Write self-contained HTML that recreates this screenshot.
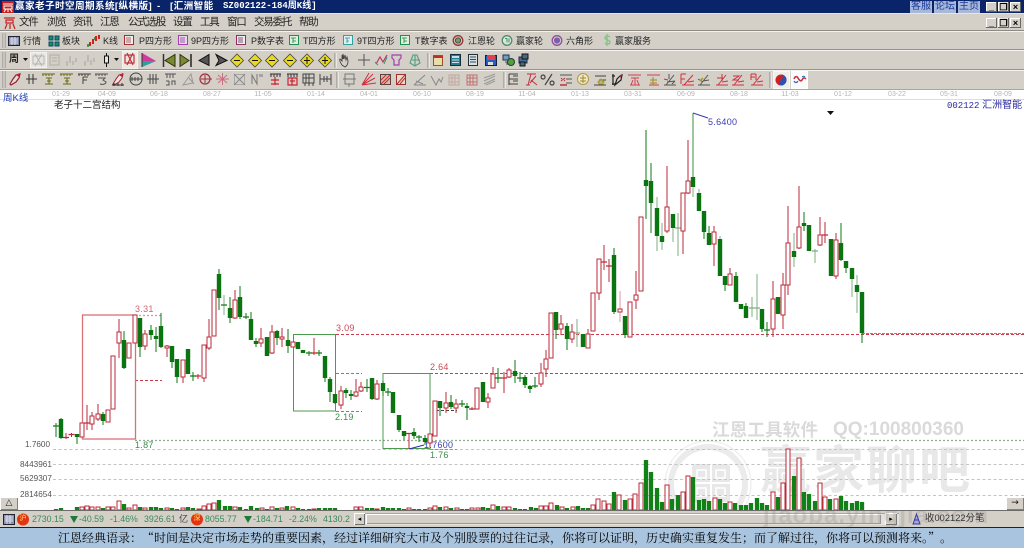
<!DOCTYPE html>
<html lang="zh"><head><meta charset="utf-8"><title>赢家老子时空周期系统</title>
<style>
html,body{margin:0;padding:0;background:#fff}
#p{position:relative;width:1024px;height:548px;overflow:hidden;background:#fff;font-family:"Liberation Sans","Noto Sans CJK SC",sans-serif;filter:blur(.22px)}
#p div,#p span.a{position:absolute;white-space:nowrap}
.bar{left:0;width:1024px;background:#d4d0c8}
.t{font-size:9px;line-height:12px;color:#222;font-family:"Liberation Sans","Noto Sans CJK SC",sans-serif}
.m{font-size:10.5px;line-height:14px;color:#222;top:15px;letter-spacing:-1.2px}
.w{color:#fff;font-weight:bold;font-size:9.6px;line-height:13px;top:0}
.d{top:91px;font:7px/8px "Liberation Sans",sans-serif;color:#b4b4b4;transform:translateX(-50%)}
.n{font:8.2px/10px "Liberation Sans",sans-serif;color:#555}
.l{font:9px/10px "Liberation Sans",sans-serif;letter-spacing:.3px}
.s{top:514px;font:8.8px/10px "Liberation Sans",sans-serif;color:#3a8a5c}
.wm{font-weight:bold;font-family:"Liberation Sans","Noto Sans CJK SC",sans-serif}
svg{position:absolute;left:0;top:0}
.hb{top:1px;height:12px;background:#a8b8d8;color:#1a3aa0;font-size:10px;line-height:12px;text-align:center;width:22px}
.wb{background:#d4d0c8;width:11px;height:10px;color:#000;font:bold 9px/10px "Liberation Sans",sans-serif;text-align:center;box-shadow:inset -1px -1px #666,inset 1px 1px #fff}
</style></head><body><div id="p">

<!-- chrome bars -->
<div style="left:0;top:0;width:1024px;height:13px;background:#0a246a"></div>
<div style="left:0;top:13px;width:1024px;height:1px;background:#e8e6e0"></div>
<div class="bar" style="top:14px;height:76px"></div>
<div style="left:0;top:30px;width:1024px;height:1px;background:#8c8a84"></div>
<div style="left:0;top:31px;width:1024px;height:1px;background:#f4f2ee"></div>
<div style="left:0;top:49px;width:1024px;height:1px;background:#96948e"></div>
<div style="left:0;top:50px;width:1024px;height:1px;background:#f4f2ee"></div>
<div style="left:0;top:69px;width:1024px;height:1px;background:#96948e"></div>
<div style="left:0;top:70px;width:1024px;height:1px;background:#f4f2ee"></div>
<div style="left:0;top:89px;width:1024px;height:1px;background:#a8a6a0"></div>

<!-- title bar -->
<svg width="16" height="14" viewBox="0 0 16 14" style="left:1px;top:0"><rect x="1" y="1" width="12" height="12" fill="#c82020"/><path d="M2 4h10M3 6h8v3H3zM3 12l2-3M7 9v3M11 12l-2-3" stroke="#fff" stroke-width="1" fill="none"/></svg>
<div class="w" style="left:15px;letter-spacing:.4px">赢家老子时空周期系统[纵横版]</div>
<div class="w" style="left:157px">-</div>
<div class="w" style="left:170px;letter-spacing:.4px">[汇洲智能</div>
<div class="w" style="left:223px;font-family:'Liberation Mono','Noto Sans CJK SC',monospace;font-size:9px">SZ002122-184周K线]</div>
<div class="hb" style="left:910px">客服</div><div class="hb" style="left:934px">论坛</div><div class="hb" style="left:958px">主页</div>
<div class="wb" style="left:986px;top:2px">_</div><div class="wb" style="left:998px;top:2px">&#10064;</div><div class="wb" style="left:1010px;top:2px">×</div>
<div class="wb" style="left:986px;top:18px">_</div><div class="wb" style="left:998px;top:18px">&#10064;</div><div class="wb" style="left:1010px;top:18px">×</div>

<!-- menu -->
<svg width="14" height="14" viewBox="0 0 14 14" style="left:3px;top:16px"><path d="M1 2h11M3 4h7v3H3zM2 13l2-5M7 8v5M12 13l-2-5" stroke="#c82020" stroke-width="1.2" fill="none"/></svg>
<div class="m" style="left:19px">文件</div><div class="m" style="left:47px">浏览</div><div class="m" style="left:73px">资讯</div><div class="m" style="left:100px">江恩</div><div class="m" style="left:128px">公式选股</div><div class="m" style="left:173px">设置</div><div class="m" style="left:200px">工具</div><div class="m" style="left:227px">窗口</div><div class="m" style="left:254px">交易委托</div><div class="m" style="left:299px">帮助</div>

<!-- toolbar text -->
<div class="t" style="left:23px;top:35px">行情</div><div class="t" style="left:62px;top:35px">板块</div><div class="t" style="left:103px;top:35px">K线</div>
<div class="t" style="left:139px;top:35px">P四方形</div><div class="t" style="left:191px;top:35px">9P四方形</div><div class="t" style="left:251px;top:35px">P数字表</div><div class="t" style="left:303px;top:35px">T四方形</div><div class="t" style="left:357px;top:35px">9T四方形</div><div class="t" style="left:415px;top:35px">T数字表</div><div class="t" style="left:468px;top:35px">江恩轮</div><div class="t" style="left:516px;top:35px">赢家轮</div><div class="t" style="left:566px;top:35px">六角形</div><div class="t" style="left:615px;top:35px">赢家服务</div>
<div class="t" style="left:9px;top:54px;font-weight:bold;font-size:10px">周</div>

<!-- toolbar icons -->
<svg width="1024" height="90" viewBox="0 0 1024 90" fill="none">
<path d="M3 33v15M3 52v16M3 71v17M5 71v17M5 52v16M5 33v15M335 53v15M428 53v15M337 72v16M504 72v16M770 72v16" stroke="#8c8a84"/>
<path d="M4 33v15M4 52v16M4 71v17M336 53v15M429 53v15M338 72v16M505 72v16M771 72v16" stroke="#fff"/>
<!-- row1 -->
<rect x="8.5" y="36.5" width="11" height="9" fill="#7c8aa8" stroke="#223"/><path d="M10 39h8M10 41h8M10 43h8M12 37v8M15 37v8" stroke="#dde"/>
<path d="M49 36h4v4h-4zM55 36h4v4h-4zM49 42h4v4h-4zM55 42h4v4h-4z" fill="#1c8c70" stroke="#0a4a60"/>
<path d="M90 46v-4M93 44v-5M96 41v-5M99 39v-4" stroke="#d02020" stroke-width="2"/><path d="M88 47v-3M95 40v-3" stroke="#208020" stroke-width="1.5"/>
<g stroke-width="1"><rect x="124.500" y="35.500" width="9" height="9" fill="#eee" stroke="#a03030"/><rect x="178.500" y="35.500" width="9" height="9" fill="#e8d8ea" stroke="#a040b0"/><rect x="236.500" y="35.500" width="9" height="9" fill="#eee" stroke="#903060"/><rect x="289.500" y="35.500" width="9" height="9" fill="#e0f0e0" stroke="#209050"/><rect x="343.500" y="35.500" width="9" height="9" fill="#e0f0f0" stroke="#30a0a0"/><rect x="400.500" y="35.500" width="9" height="9" fill="#e0f0e0" stroke="#209050"/></g>
<path d="M126 38h5M126 40h5M126 42h5" stroke="#a03030" stroke-width=".8"/><path d="M180 38h5M180 40h5M180 42h5" stroke="#903090" stroke-width=".8"/><path d="M238 38h5M238 40h5M238 42h5" stroke="#602050" stroke-width=".8"/><path d="M291 38h5M293 38v5M296 41h-3" stroke="#208040" stroke-width=".8"/><path d="M345 38h5M347 38v5M349 41h-2" stroke="#2090a0" stroke-width=".8"/><path d="M402 38h5M404 38v5M407 41h-3" stroke="#208040" stroke-width=".8"/>
<circle cx="458" cy="40.500" r="4.800" stroke="#9a3030" stroke-width="1.300"/><circle cx="458" cy="40.500" r="2.600" fill="#7a9a70" stroke="#405040"/>
<circle cx="507" cy="40.500" r="4.800" fill="#d8e8d8" stroke="#508a70" stroke-width="1.300"/><path d="M505 38.500h2v4M509 38.500v4" stroke="#307050" stroke-width=".8"/>
<circle cx="557" cy="40.500" r="4.800" stroke="#8a50a0" stroke-width="1.300"/><circle cx="557" cy="40.500" r="2.600" fill="#5a70b0" stroke="#a050a0"/>
<path d="M610 37c-2-1.500-5-1-5 1s5 2 5 4-3 3-5 1M607 34v12" stroke="#8cc48c" stroke-width="1.600"/>
<!-- row2 -->
<path d="M23 58h5l-2.500 3zM114 58h5l-2.500 3z" fill="#111"/>
<rect x="30.500" y="52.500" width="16" height="15" fill="#e8e6e2" stroke="#f4f2ee"/><path d="M33 56h11v8H33zM35 54l7 12M42 54l-7 12" stroke="#b4b2aa" stroke-width=".9"/>
<path d="M50 55h9v10h-9zM52 58h5M52 61h5" stroke="#b0aea6"/><path d="M67 66v-5M70 63v-7M73 65v-4M76 62v-4M85 66v-5M88 62v-7M91 65v-5M94 62v-4" stroke="#b0aea6" stroke-width="1.300"/>
<path d="M106.500 53v14" stroke="#111"/><rect x="104.500" y="56" width="4" height="7" fill="#e8e6e0" stroke="#111"/>
<rect x="122.500" y="51.500" width="15" height="17" fill="#ece8e0" stroke="#f4f2ee"/><path d="M125 55h9v8h-9zM127 53l6 12M133 53l-6 12" stroke="#c03040" stroke-width="1.200"/>
<path d="M142 53l14 8-14 6z" fill="#d03a9a"/><path d="M142 61l14 0-14 6z" fill="#2aa0a0"/><path d="M142 53v14" stroke="#333"/>
<path d="M163.500 54v13" stroke="#333" stroke-width="1.500"/><path d="M165 60.500l10-6v12z" fill="#7a8a30" stroke="#303010"/>
<path d="M191 54v13" stroke="#222" stroke-width="1.500"/><path d="M189 60.500l-9-6v12z" fill="#7a8a30" stroke="#303010"/>
<path d="M199 60.500l10-6v11l-10-5z" fill="#555" stroke="#111"/><path d="M227 60.500l-11-6 3 6-3 5z" fill="#555" stroke="#111"/>
<g fill="#e8d820" stroke="#444" stroke-width=".8"><path d="M237 54l6.500 6.500-6.500 6.500-6.500-6.500z"/><path d="M255 54l6.500 6.500-6.500 6.500-6.500-6.500z"/><path d="M272 54l6.500 6.500-6.500 6.500-6.500-6.500z"/><path d="M290 54l6.500 6.500-6.500 6.500-6.500-6.500z"/><path d="M307 54l6.500 6.500-6.500 6.500-6.500-6.500z"/><path d="M325 54l6.500 6.500-6.500 6.500-6.500-6.500z"/></g>
<path d="M234 60.500h6M252 60.500h6M269 60.500h6M287 60.500h6M304 60.500h6M322 60.500h6M307 57v7M325 57v7" stroke="#111"/>
<path d="M342 65c-2-3-3-5-2-6l2 2v-6l1 4v-5l1 5 1-4 1 5 1-3 1 4c0 3-1 5-3 6z" stroke="#444" stroke-width=".9"/>
<path d="M364 54v12M358 60h12" stroke="#555"/><path d="M376 64l4-7 3 5 4-7" stroke="#c03060" stroke-width="1.200"/><path d="M375 62l3 3M384 64l3-7" stroke="#30a070"/>
<path d="M392 55h9v3l-2 2v5h-5v-5l-2-2z" stroke="#a040b0" stroke-width="1.200"/><path d="M410 63l3-8h4l3 8-5 3zM412 60h8M415 55v11" stroke="#50a080" stroke-width="1.100"/>
<rect x="433.500" y="55.500" width="9" height="10" fill="#e8dca8" stroke="#a05020"/><path d="M433 57h10" stroke="#c03020" stroke-width="2"/>
<rect x="450.500" y="54.500" width="10" height="11" fill="#208090" stroke="#103040"/><path d="M452 57h7" stroke="#cde" stroke-width="2"/><path d="M452 60h7M452 62.500h7" stroke="#cde"/>
<rect x="468.500" y="54.500" width="9" height="11" fill="#d8e0e0" stroke="#203040"/><path d="M470 57h6M470 59.500h6M470 62h6" stroke="#205060"/>
<rect x="485.500" y="55.500" width="11" height="10" fill="#2060c0" stroke="#102040"/><path d="M487 55v5h8v-5" fill="#e04050"/><path d="M488 62h5v3h-5z" fill="#ddd"/>
<path d="M503 55h6v5h-6z" fill="#70a0c0" stroke="#203050"/><circle cx="511" cy="62" r="3.500" fill="#50a040" stroke="#204030"/><path d="M505 62h2v3" stroke="#555"/>
<path d="M519 57h8v6h-8z" fill="#4070a0" stroke="#203040"/><path d="M522 54h6v5h-6zM520 62h5v4h-5z" fill="#506a70" stroke="#112"/>
<!-- row3 -->
<path d="M10 84l3-5 3-4 4-1-1 4-3 4-5 3z" fill="#e8d8d8" stroke="#902030" stroke-width="1.200"/><path d="M16 75l4-2-1 4z" fill="#c02030"/>
<path d="M26 79h11M29 74v10M33 74v10" stroke="#333"/>
<path d="M42 74h13M43 74v2M46 74v2M49 74v2M52 74v2M46 78h6M49 78v6M45 84h8M47 81h4" stroke="#6a6a10"/>
<path d="M60 74h13M61 74v2M64 74v2M67 74v2M70 74v2M64 78h6M67 78v6M63 84h8M65 81h4" stroke="#6a6a10"/>
<path d="M78 74h13M79 74v2M82 74v2M85 74v2M88 74v2M83 77v7M83 77h5M83 80h4" stroke="#444"/>
<path d="M95 74h13M96 74v2M99 74v2M102 74v2M105 74v2M98 78h7l-2 2 3 2c0 2-3 3-6 2" stroke="#555"/>
<path d="M113 84l3-5 3-4 4-1-1 4-3 4-5 3z" stroke="#a02030" fill="#f0e0e0"/><path d="M119 75l4-2-1 4z" fill="#c02030"/><path d="M112 85h12M114 83v3M118 83v3M122 83v3" stroke="#333"/>
<circle cx="136" cy="79" r="6" stroke="#444"/><path d="M130 79h12M132 77v4M135 77v4M138 77v4" stroke="#444"/>
<path d="M147 79h12M150 74v10M153 74v10M156 74v10" stroke="#444"/>
<path d="M165 74h11M167 74v4M170 74v4M173 74v4M166 81h3M169 81v4h-3M172 85v-4h3v4" stroke="#555"/>
<path d="M183 85l8-11 2 9zM189 78l5 6" stroke="#999"/>
<circle cx="205" cy="79" r="5" stroke="#a03040" stroke-width="1.200"/><path d="M201 79h11M205 75v8" stroke="#a03040"/>
<path d="M216 79h13M222.500 73v12M218 75l9 8M227 75l-9 8" stroke="#c87080"/>
<rect x="234.500" y="74.500" width="10" height="10" stroke="#aaa"/><path d="M234 74l11 11M245 74l-11 11" stroke="#888"/>
<path d="M252 84v-9l5 9v-10M260 74v3M262 74v3" stroke="#777"/>
<path d="M270 74h11M271 74v3M274 74v3M277 74v3M280 74v3" stroke="#333"/><path d="M275 77v8M271 80h8M271 84h8" stroke="#d02030" stroke-width="1.200"/>
<path d="M287 74h11M288 74v3M291 74v3M294 74v3M297 74v3" stroke="#333"/><path d="M288 78h9v7h-9zM290 81h5M292 78v7" stroke="#d02030" stroke-width="1.200"/>
<path d="M303 74h11v9h-11zM306 74v9M309 74v9M303 78h11M305 83v3M309 83v3M313 83v3" stroke="#444"/>
<path d="M320 74v11M331 74v11M320 79h11M324 76v6M327 76v6" stroke="#444"/>
<path d="M345 74h9v10h-9zM343 79h13M349 84v3" stroke="#777"/>
<path d="M362 85l11-11M362 85l13-7M362 85l14-2M362 85l7-12" stroke="#d03040"/>
<rect x="380.500" y="74.500" width="10" height="10" fill="#d8b8a8" stroke="#604040"/><path d="M381 84l9-9M384 84l6-6M381 80l5-5" stroke="#c03030"/>
<rect x="396.500" y="74.500" width="9" height="10" fill="#e8d8c8" stroke="#a03030"/><path d="M397 84l8-9M400 84l5-6" stroke="#b03030"/>
<path d="M414 85l11-10M414 85h12M416 81l7 3" stroke="#888"/><path d="M431 76l5 9 3-6 2 3 2-5" stroke="#888"/>
<path d="M449 75h10v10h-10zM452 75v10M455 75v10M449 78h10M449 82h10" stroke="#c0a8a0"/><path d="M467 75h10v10h-10zM470 75v10M473 75v10M467 78h10M467 82h10" stroke="#c07070"/>
<path d="M484 84l11-5M484 81l11-5M484 78l11-4M486 85l9-4" stroke="#999"/>
<path d="M509 74v11M509 74h9M509 79h9M509 84h9M513 76h5M513 81h5" stroke="#444" stroke-width="1.100"/>
<path d="M527 74h9M531 74l-3 11M531 80l6 5M536 76l-6 7M526 85h4" stroke="#c03040"/>
<path d="M552 74l-7 11M543 75a2 2 0 1 0 .1 0zM552 81a2 2 0 1 0 .1 0z" stroke="#444" stroke-width="1.200"/>
<path d="M560 75h12M566 79h6M566 83h6" stroke="#555"/><path d="M560 85h7" stroke="#c03040" stroke-width="1.500"/><path d="M561 81l4-3M561 78l1 1M565 81l-1-1" stroke="#c03040"/>
<circle cx="583" cy="79" r="5.500" fill="#eee8c8" stroke="#b09a40"/><path d="M583 75v8M580 78h6M580 81h6" stroke="#a08a30"/>
<path d="M595 76h11M599 80h7M594 85h12" stroke="#444"/><path d="M598 82l3-3 3 3zM599 82h4v2h-4z" stroke="#a09a20"/>
<path d="M613 74v11M615 85l2-6 3-3 2-1-1 5zM612 76h3M612 84h3" stroke="#222" stroke-width="1.200"/><path d="M619 76l3-2-1 4z" fill="#c02030"/>
<path d="M628 75h13M630 85h10M631 78h8M635 78v7M631 85l2-5M639 85l-2-5" stroke="#d04050"/>
<path d="M647 75h13M649 85h10" stroke="#d04050"/><path d="M653 77v8M650 80h7M650 83h7" stroke="#a08a20"/>
<path d="M664 85h12M666 85l8-10M669 74v5M667 82l8-1M672 84l3-3" stroke="#555"/><path d="M664 79l4 1" stroke="#c03040"/>
<path d="M681 74h5M681 74v10M681 79h4M682 85h12M684 85l9-10M688 82l6-1" stroke="#d03040"/>
<path d="M698 85h12M700 85l8-10M703 81l6-1M698 79l5 3" stroke="#555"/><path d="M700 81l3-3" stroke="#a09a20" stroke-width="1.500"/>
<path d="M716 85h12M718 85l8-10M722 74v7M717 78h6M722 82l6-1" stroke="#d03040"/>
<path d="M733 76h6l-6 4h6M732 85h12M734 85l8-10M738 82l6-1" stroke="#d03040"/>
<path d="M751 74h5M751 74v6M751 77h4M756 74v6M751 85h12M753 85l8-10M757 82l6-1" stroke="#d03040"/>
<rect x="773.500" y="71.500" width="16" height="17" fill="#f0eeea" stroke="#f8f8f8"/><circle cx="781" cy="80" r="5.500" fill="#d02020"/><path d="M781 74.500a5.500 5.500 0 0 1 0 11c-2.500-1-2.500-3.500 0-5.500s2.500-4 0-5.500z" fill="#3050b0"/>
<rect x="791.500" y="71.500" width="16" height="17" fill="#fafafa" stroke="#fff"/><path d="M794 79c1-3 3-3 4-1s3 4 4 2 2-3 4-1" stroke="#c03040" stroke-width="1.500"/><path d="M794 81c1 2 3 2 4 0" stroke="#3060b0" stroke-width="1.200"/><path d="M802 77c1-1 2-1 3 0" stroke="#3060b0"/>
</svg>

<!-- chart header -->
<div class="d" style="left:61px">01-29</div><div class="d" style="left:107px">04-09</div><div class="d" style="left:159px">06-18</div><div class="d" style="left:212px">08-27</div><div class="d" style="left:263px">11-05</div><div class="d" style="left:316px">01-14</div><div class="d" style="left:369px">04-01</div><div class="d" style="left:422px">06-10</div><div class="d" style="left:475px">08-19</div><div class="d" style="left:527px">11-04</div><div class="d" style="left:580px">01-13</div><div class="d" style="left:633px">03-31</div><div class="d" style="left:686px">06-09</div><div class="d" style="left:739px">08-18</div><div class="d" style="left:790px">11-03</div><div class="d" style="left:843px">01-12</div><div class="d" style="left:897px">03-22</div><div class="d" style="left:949px">05-31</div><div class="d" style="left:1003px">08-09</div>
<div style="left:0;top:99px;width:1024px;height:1px;background:#dcdcdc"></div>
<div class="t" style="left:3px;top:93px;color:#2040b8;font-size:9.5px">周K线</div>
<div class="t" style="left:54px;top:100px;font-size:9.5px">老子十二宫结构</div>
<div class="t" style="left:947px;top:100px;color:#2a2aa0;font-size:10px"><span style="font-family:'Liberation Mono',monospace;font-size:9px">002122</span> 汇洲智能</div>

<!-- watermark -->
<div class="wm" style="left:712px;top:419px;font-size:17.500px;line-height:22px;color:#dadada;letter-spacing:.2px">江恩工具软件</div>
<div class="wm" style="left:833px;top:419px;font-size:19px;line-height:22px;color:#dadada">QQ:100800360</div>
<div class="wm" style="left:760px;top:441px;font-size:51px;line-height:60px;color:#e8e8e8;letter-spacing:2px">赢家聊吧</div>
<svg width="1024" height="548" viewBox="0 0 1024 548" fill="none">
<circle cx="708" cy="484" r="37" stroke="#ebebeb" stroke-width="6"/><circle cx="708" cy="484" r="43" stroke="#f0f0f0" stroke-width="1.500"/>
<rect x="692" y="464" width="38" height="38" rx="3" fill="#e8e8e8"/><path d="M711 464v38M692 483h38" stroke="#fff" stroke-width="2"/><path d="M697 470h9v8h-9zM716 470h9v8h-9zM697 488h9v8h-9zM716 488h9v8h-9z" stroke="#fff" stroke-width="1.500"/>

<!-- grid lines -->
<path d="M135 440.500H1024" stroke="#8fae90" stroke-width="1.300" stroke-dasharray="2 2"/>
<path d="M53 449.500H1024M53 464.500H1024M53 479.500H1024M53 495.500H1024" stroke="#c4c4c4" stroke-dasharray="3 2.500"/>
<path d="M336 334.500H1024M430 373.500H1024" stroke="#cc3a4c" stroke-dasharray="3 2"/>
<path d="M862 333.500H1024" stroke="#8a8a8a" stroke-dasharray="3 1"/>
<path d="M135 315.500H161" stroke="#d890a0" stroke-width="1.200" stroke-dasharray="2 2"/>
<path d="M135 380.500H162" stroke="#cc3a4c" stroke-dasharray="3 2"/>
<path d="M336 373.500H362M336 411.500H362" stroke="#5a9a5a" stroke-dasharray="3 2"/>
<path d="M436 410.500H457" stroke="#444" stroke-dasharray="3 2"/>
<path d="M430 449.500H457" stroke="#7aa87a" stroke-dasharray="3 2"/>
<rect x="82.500" y="315" width="53" height="124" stroke="#d8707a" stroke-width="1.300"/>
<rect x="293.500" y="334.500" width="42" height="76.500" stroke="#4c9a50"/>
<rect x="383" y="373.500" width="47" height="75" stroke="#4c9a50"/>
<path d="M409 449l15-4" stroke="#2a2ab0"/><path d="M693 113l15 5" stroke="#3a3ab0"/>
<path d="M827 111h7l-3.500 4z" fill="#111"/>

<!-- candle wicks -->
<path stroke="#0e7a14" d="M61 418V439M77 434V444M103 412V425M124 331V369M140 318V357M151 325V340M156 327V352M161 313V348M172 346V368M177 359V383M219 269V310M230 297V323M240 286V319M251 312V340M256 338V347M277 330V345M288 329V353M325 356V382M330 377V402M335 394V404M346 388V398M351 390V400M372 378V400M383 381V396M399 415V432M404 431V440M414 428V439M425 435V445M440 401V416M451 395V409M467 403V420M515 360V383M525 375V388M530 385V393M556 312V339M567 323V350M614 248V314M625 316V338M646 130V219M651 163V233M704 211V239M709 226V245M725 276V291M736 272V302M746 303V318M762 309V332M804 212V231M841 223V261M846 261V273M862 292V343M56 423V437M193 372V381M246 313V319M309 351V356M319 350V356M367 379V392M388 388V396M419 435V442M462 400V407M498 368V383M520 372V382M535 377V388M767 322V337"/>
<path stroke="#7fae80" d="M224 295V315M577 319V347M678 213V256M752 297V317M757 274V320M815 249V263M657 197V251M662 223V250M673 214V242M699 189V211M693 113V197M720 236V240M794 233V267M852 268V297M857 275V313"/>
<path stroke="#3a9040" d="M693 113V177"/>
<path stroke="#bc2a38" d="M92 412V430M98 404V421M119 319V358M145 330V350M167 345V357M183 360V383M204 345V382M209 319V350M235 290V319M261 328V347M272 325V354M282 328V347M341 386V409M356 379V397M361 382V392M377 380V400M430 434V447M446 392V413M456 399V413M488 393V408M493 367V388M509 368V378M541 363V387M546 350V377M561 315V335M572 324V343M588 329V348M599 259V300M636 271V309M667 166V233M683 193V254M688 140V194M714 226V266M730 268V285M773 281V337M783 273V329M788 206V295M799 186V249M820 217V246M836 233V279M66 433V439M71.500 433V437M87 405V430M198 374V379M314 338V355M409 433V449M472 407V410M504 372V393M604 245V270M609 259V282M825 222V243"/>
<path stroke="#d89aa2" d="M620 291V322"/>
<path stroke="#0e7a14" stroke-width="1.200" d="M53 426h6M190 376h6M221 305h6M243 317h6M306 353h6M316 353h6M364 387.500h6M385 392h6M416 437h6M459 404h6M495 378h6M517 378h6M532 386h6M764 330h6"/>
<path stroke="#7fae80" stroke-width="1.200" d="M574 333h6M675 228h6M749 308h6M754 308h6M812 251h6"/>
<path stroke="#bc2a38" stroke-width="1.200" d="M63 437.500h6M68.500 434.500h6M84 423h6M195 376h6M311 353h6M406 433.500h6M469 409h6M501 378h6M601 262h6M606 266h6M822 235h6"/>
<!-- green bodies -->
<path stroke="#0a7410" stroke-width="4.400" d="M61 419V438M77 434V437M103 414V421M124 340V368M140 318V347M151 330V335M156 336V339M161 326V347M172 346V362M177 359V377M188 349V374M219 274V298M230 308V318M240 297V317M251 319V340M256 341V344M267 337V356M277 331V338M288 340V346M298 342V349M303 350V353M325 356V378M330 379V392M335 394V403M346 390V393M351 394V396M372 378V399M383 383V391M393 392V413M399 415V430M404 431V436M414 432V436M425 438V442M440 401V408M451 402V407M467 406V408M483 382V402M515 371V376M525 377V385M530 386V389M556 312V330M567 326V339M583 334V347M614 255V312M625 316V335M646 180V186M651 181V203M657 208V236M662 236V242M673 214V228M693 177V187M699 193V211M704 211V232M709 233V245M720 239V276M725 276V285M736 276V302M741 304V309M746 306V318M762 309V329M778 297V314M794 251V257M804 223V226M809 225V251M831 239V276M841 243V260M846 261V268M852 268V279M857 285V292M862 292V333"/>
<!-- hollow bodies -->
<path fill="#fff" stroke="#bc2a38" d="M80 423h4V437h-4zM90 416h4V424h-4zM96 414h4V419h-4zM106 410h4V422h-4zM111 356h4V409h-4zM117 332h4V343h-4zM127 343h4V358h-4zM133 315h4V343h-4zM143 334h4V346h-4zM165 346h4V348h-4zM181 360h4V377h-4zM202 345h4V378h-4zM207 337h4V348h-4zM212 290h4V336h-4zM233 300h4V318h-4zM259 339h4V343h-4zM270 332h4V353h-4zM280 337h4V339h-4zM291 342h4V347h-4zM339 391h4V405h-4zM354 392h4V396h-4zM359 387h4V391h-4zM375 384h4V399h-4zM428 434h4V443h-4zM433 401h4V436h-4zM444 403h4V408h-4zM454 404h4V408h-4zM475 388h4V409h-4zM486 398h4V402h-4zM491 374h4V388h-4zM507 370h4V377h-4zM539 373h4V384h-4zM544 359h4V369h-4zM549 313h4V358h-4zM559 324h4V329h-4zM570 332h4V339h-4zM586 334h4V348h-4zM591 293h4V331h-4zM597 259h4V293h-4zM618 309h4V312h-4zM628 302h4V337h-4zM634 295h4V300h-4zM639 217h4V291h-4zM665 207h4V231h-4zM681 193h4V231h-4zM686 181h4V193h-4zM712 232h4V244h-4zM728 274h4V285h-4zM771 299h4V329h-4zM781 285h4V315h-4zM786 243h4V285h-4zM797 227h4V248h-4zM818 235h4V245h-4zM834 240h4V276h-4z"/>

<!-- volume -->
<path stroke="#118016" stroke-width="4.300" d="M56 509V510M61 508V510M77 507V510M103 508V510M124 504V510M140 507V510M151 507V510M156 507V510M161 508V510M172 508V510M177 509V510M188 507V510M193 508V510M219 500V510M225 506V510M230 506V510M240 507V510M246 509V510M251 506V510M257 508V510M267 509V510M277 508V510M287 506V510M298 508V510M303 509V510M309 509V510M319 508V510M325 508V510M330 508V510M335 508V510M367 508V510M372 508V510M383 507V510M388 508V510M393 508V510M399 508V510M404 509V510M414 509V510M419 509V510M425 509V510M440 507V510M451 508V510M462 509V510M467 509V510M483 507V510M488 508V510M498 506V510M515 508V510M520 509V510M525 509V510M531 507V510M536 508V510M557 505V510M567 508V510M578 506V510M583 508V510M588 508V510M614 492V510M625 500V510M646 460V510M651 472V510M657 488V510M662 502V510M672 499V510M678 495V510M693 477V510M699 500V510M704 499V510M709 501V510M720 499V510M725 503V510M735 503V510M741 505V510M746 505V510M751 503V510M757 498V510M762 503V510M767 505V510M778 497V510M794 476V510M804 492V510M809 494V510M815 501V510M830 499V510M841 496V510M846 501V510M852 503V510M857 501V510M862 502V510"/>
<path fill="#fff" stroke="#bc2a38" d="M80 507h4V510h-4zM85 506h4V510h-4zM90 507h4V510h-4zM96 507h4V510h-4zM106 507h4V510h-4zM111 507h4V510h-4zM117 501h4V510h-4zM127 508h4V510h-4zM133 505h4V510h-4zM143 508h4V510h-4zM165 508h4V510h-4zM181 508h4V510h-4zM197 509h4V510h-4zM202 506h4V510h-4zM207 504h4V510h-4zM212 503h4V510h-4zM233 507h4V510h-4zM260 508h4V510h-4zM270 507h4V510h-4zM280 508h4V510h-4zM291 507h4V510h-4zM312 509h4V510h-4zM354 507h4V510h-4zM359 507h4V510h-4zM375 509h4V510h-4zM407 508h4V510h-4zM428 508h4V510h-4zM433 506h4V510h-4zM444 507h4V510h-4zM455 508h4V510h-4zM470 508h4V510h-4zM476 508h4V510h-4zM491 505h4V510h-4zM502 507h4V510h-4zM507 507h4V510h-4zM539 506h4V510h-4zM544 506h4V510h-4zM549 503h4V510h-4zM560 507h4V510h-4zM571 507h4V510h-4zM591 505h4V510h-4zM596 499h4V510h-4zM602 501h4V510h-4zM607 504h4V510h-4zM617 495h4V510h-4zM628 499h4V510h-4zM633 494h4V510h-4zM639 483h4V510h-4zM665 485h4V510h-4zM681 492h4V510h-4zM686 476h4V510h-4zM713 498h4V510h-4zM728 502h4V510h-4zM771 492h4V510h-4zM781 483h4V510h-4zM786 449h4V510h-4zM797 458h4V510h-4zM818 483h4V510h-4zM823 497h4V510h-4zM834 499h4V510h-4z"/>
</svg>

<!-- chart labels -->
<div class="l" style="left:135px;top:304px;color:#d06474">3.31</div>
<div class="l" style="left:336px;top:323px;color:#c84a58">3.09</div>
<div class="l" style="left:430px;top:362px;color:#c84a58">2.64</div>
<div class="l" style="left:135px;top:440px;color:#3c8a4c">1.87</div>
<div class="l" style="left:335px;top:412px;color:#3c8a4c">2.19</div>
<div class="l" style="left:430px;top:450px;color:#3c8a4c">1.76</div>
<div class="l" style="left:424px;top:440px;color:#3a3ab0">1.7600</div>
<div class="l" style="left:708px;top:117px;color:#3a3ab0">5.6400</div>
<div class="n" style="left:25px;top:440px">1.7600</div>
<div class="n" style="left:20px;top:460px">8443961</div>
<div class="n" style="left:20px;top:474px">5629307</div>
<div class="n" style="left:20px;top:490px">2814654</div>
<div style="left:0;top:497px;width:18px;height:13px;background:#d4d0c8;box-shadow:inset 1px 1px #fff,inset -1px -1px #808080;font:9px/12px 'DejaVu Sans',sans-serif;text-align:center;color:#222">△</div>
<div style="left:1006px;top:497px;width:18px;height:13px;background:#d4d0c8;box-shadow:inset 1px 1px #fff,inset -1px -1px #808080;font:9px/12px 'DejaVu Sans',sans-serif;text-align:center;color:#111">→</div>

<!-- status strip -->
<div class="bar" style="top:510px;height:18px;border-top:1px solid #6e6c68;box-sizing:border-box"></div>
<div style="left:354px;top:513px;width:545px;height:12px;background:#e4e2dc;box-shadow:inset 0 1px #a8a6a0"></div>
<div style="left:354px;top:513px;width:11px;height:12px;background:#d4d0c8;box-shadow:inset 1px 1px #fff,inset -1px -1px #707070;font:7px/12px 'DejaVu Sans',sans-serif;text-align:center">◂</div>
<div style="left:366px;top:514px;width:515px;height:10px;background:#d4d0c8;box-shadow:inset 1px 1px #fff,inset -1px -1px #999"></div>
<div style="left:885px;top:513px;width:12px;height:12px;background:#d4d0c8;box-shadow:inset 1px 1px #fff,inset -1px -1px #707070;font:7px/12px 'DejaVu Sans',sans-serif;text-align:center">▸</div>
<div style="left:763px;top:511px;width:250px;height:16px;overflow:hidden"><div class="wm" style="left:0;top:-9px;font-size:24px;line-height:28px;color:rgba(150,150,150,.3);font-family:'Liberation Sans',sans-serif;letter-spacing:1px">jiaoba.yingjia.com</div></div>
<svg width="1024" height="548" viewBox="0 0 1024 548" fill="none">
<rect x="3.500" y="514.500" width="11" height="10" fill="#8894ac" stroke="#223"/><path d="M5 517h8M5 519h8M5 521h8M7 515v9M10 515v9" stroke="#dde"/>
<circle cx="23" cy="519.500" r="6" fill="#e03414"/><circle cx="197" cy="519.500" r="6" fill="#e03414"/>
<path d="M70 516h8l-4 7zM244 516h8l-4 7z" fill="#1e7a3a"/>
<path d="M913 524l3.500-10 3.500 10zM914 520h5" stroke="#3a3aa0" fill="#a0a8d8"/>
<path d="M0 527.500H1024" stroke="#222"/>
</svg>
<div style="left:19px;top:514px;font-size:7px;line-height:10px;color:#ffe060;width:8px;text-align:center">沪</div>
<div style="left:193px;top:514px;font-size:7px;line-height:10px;color:#ffe060;width:8px;text-align:center">深</div>
<div class="s" style="left:32px">2730.15</div><div class="s" style="left:79px">-40.59</div><div class="s" style="left:110px">-1.46%</div><div class="s" style="left:144px">3926.61</div><div class="s" style="left:179px;font-family:'Liberation Sans','Noto Sans CJK SC',sans-serif;color:#444;font-size:9px">亿</div>
<div class="s" style="left:205px">8055.77</div><div class="s" style="left:253px">-184.71</div><div class="s" style="left:289px">-2.24%</div><div class="s" style="left:323px;width:30px;overflow:hidden">4130.2</div>
<div class="t" style="left:925px;top:513px;color:#333;font-size:9.5px">收<span style="font:9.300px 'Liberation Sans',sans-serif">002122</span>分笔</div>

<!-- quote bar -->
<div style="left:0;top:528px;width:1024px;height:20px;background:#a9c4de"></div>
<div style="left:58px;top:530px;font-size:12px;line-height:16px;color:#000;font-family:'Noto Serif CJK SC','Liberation Serif',serif">江恩经典语录：“时间是决定市场走势的重要因素，经过详细研究大市及个别股票的过往记录，你将可以证明，历史确实重复发生；而了解过往，你将可以预测将来。”。</div>
</div></body></html>
